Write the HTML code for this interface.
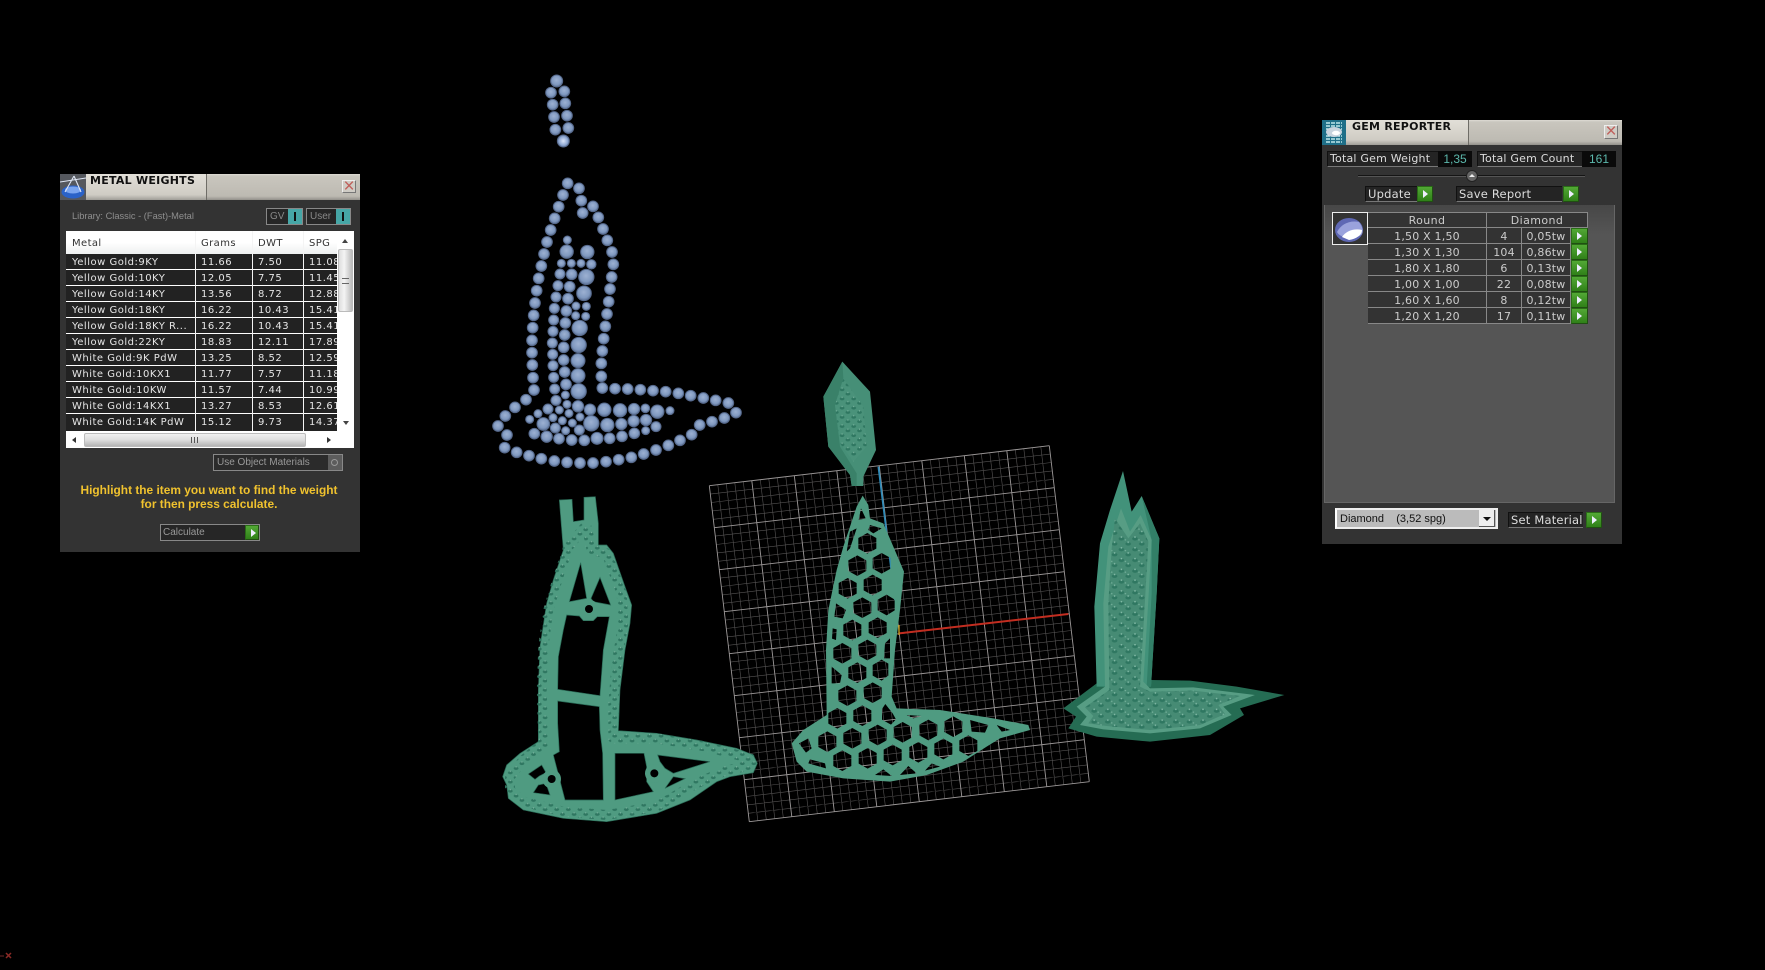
<!DOCTYPE html>
<html><head><meta charset="utf-8">
<style>
html,body{margin:0;padding:0;background:#000;width:1765px;height:970px;overflow:hidden}
body{position:relative;font-family:"DejaVu Sans",sans-serif}
.a{position:absolute;box-sizing:border-box;white-space:nowrap}
svg{position:absolute;left:0;top:0}
.panel{background:#333}
.tb{background:linear-gradient(#dedbd4 0,#c9c6be 8%,#bdbab2 85%,#92908a 100%)}
.tbl{background:linear-gradient(#e2dfd8,#cfccc4 80%,#a09e98 100%);border-right:1px solid #6f6d67}
.ttl{font:bold 11px "DejaVu Sans",sans-serif;color:#111;letter-spacing:.25px}
.cls{background:#cfccc5;border:1px solid #eee;border-right-color:#777;border-bottom-color:#777;color:#c0605c;font:19px/11px "Liberation Sans",sans-serif;text-align:center}
.rows{overflow:hidden;background:#fff}
.r{height:15px;border-bottom:1px solid #fff;background:#222;position:relative;color:#e6e6e6;font:10px/16px "DejaVu Sans",sans-serif;letter-spacing:.5px}
.r span{position:absolute;top:1px}
.v{background:#f4f4f4}
.grn{background:linear-gradient(#52a835,#2f8018);border:1px solid #2a6c17;border-right-color:#204f12;border-bottom-color:#204f12}
.grn:after{content:"";position:absolute;left:5px;top:3px;border-left:5px solid #eef;border-top:4px solid transparent;border-bottom:4px solid transparent}
.box{border:1px solid #888;background:#262626;color:#999;font:10px "Liberation Sans",sans-serif}
.lbl{background:#242424;border-left:1px solid #111;border-top:1px solid #111;border-bottom:1px solid #777;color:#ddd;font:11px/14px "DejaVu Sans",sans-serif;letter-spacing:.2px;padding-left:2px}
.g{color:#ccc;font:11px/17px "DejaVu Sans",sans-serif;letter-spacing:.2px;text-align:center;background:#333;border:1px solid #888;border-top:0;border-left:0}
</style></head><body>
<svg width="1765" height="970" viewBox="0 0 1765 970">
<defs>
<radialGradient id="gem" cx=".48" cy=".42" r=".6"><stop offset="0" stop-color="#9db1d2"/><stop offset=".65" stop-color="#7f98bf"/><stop offset="1" stop-color="#56698c"/></radialGradient>
<radialGradient id="gemb" cx=".5" cy=".5" r=".6"><stop offset="0" stop-color="#dde6fa"/><stop offset=".6" stop-color="#8ea8d2"/><stop offset="1" stop-color="#47597a"/></radialGradient>
<pattern id="spk" width="24" height="19" patternUnits="userSpaceOnUse" patternTransform="scale(1.45)">
<ellipse cx="6" cy="6" rx="5" ry="3.2" fill="#2f7761"/><ellipse cx="18" cy="15" rx="5" ry="3.2" fill="#2f7761"/>
<circle cx="6" cy="3" r="1.4" fill="#78b39e"/><circle cx="18" cy="12" r="1.4" fill="#78b39e"/>
</pattern>
<pattern id="spk3" width="24" height="19" patternUnits="userSpaceOnUse" patternTransform="scale(1.7)">
<ellipse cx="6" cy="6" rx="5" ry="3.2" fill="#2f7761"/><ellipse cx="18" cy="15" rx="5" ry="3.2" fill="#2f7761"/>
<circle cx="6" cy="3" r="1.5" fill="#84bca8"/><circle cx="18" cy="12" r="1.5" fill="#84bca8"/><circle cx="13" cy="8" r="1.2" fill="#78b39e"/>
</pattern>
</defs>

<!-- grid -->
<g transform="matrix(8.5 -1 1 8.4 709.3 485.7)" fill="none" stroke-width=".6">
<path vector-effect="non-scaling-stroke" stroke="#565454" d="M1 0V40M2 0V40M3 0V40M4 0V40M6 0V40M7 0V40M8 0V40M9 0V40M11 0V40M12 0V40M13 0V40M14 0V40M16 0V40M17 0V40M18 0V40M19 0V40M21 0V40M22 0V40M23 0V40M24 0V40M26 0V40M27 0V40M28 0V40M29 0V40M31 0V40M32 0V40M33 0V40M34 0V40M36 0V40M37 0V40M38 0V40M39 0V40M0 1H40M0 2H40M0 3H40M0 4H40M0 6H40M0 7H40M0 8H40M0 9H40M0 11H40M0 12H40M0 13H40M0 14H40M0 16H40M0 17H40M0 18H40M0 19H40M0 21H40M0 22H40M0 23H40M0 24H40M0 26H40M0 27H40M0 28H40M0 29H40M0 31H40M0 32H40M0 33H40M0 34H40M0 36H40M0 37H40M0 38H40M0 39H40"/>
<path vector-effect="non-scaling-stroke" stroke="#9c9898" stroke-width=".9" d="M0 0V40M5 0V40M10 0V40M15 0V40M20 0V40M25 0V40M30 0V40M35 0V40M40 0V40M0 0H40M0 5H40M0 10H40M0 15H40M0 20H40M0 25H40M0 30H40M0 35H40M0 40H40"/>
</g>
<g transform="translate(700 350) scale(.33333)">
<path d="M597 850L1105 792" stroke="#c22d20" stroke-width="6" fill="none"/>
<path d="M535 350L585 750" stroke="#2c8ab8" stroke-width="5" fill="none"/>
<path d="M597 825V855" stroke="#c9a020" stroke-width="4" fill="none"/>
<!-- top leaf -->
<path d="M427 35L510 125 528 300 490 380 490 408 455 408 450 375 385 290 370 140Z" fill="#468f77"/>
<path d="M427 35L370 140 385 290 450 375 455 408 470 408 470 370 420 290 405 165 430 85Z" fill="#3a8169"/>
<path d="M430 85L490 170 500 290 460 335 420 280 405 165Z" fill="#4a927a"/>
<path d="M430 85L490 170 500 290 460 335 420 280 405 165Z" fill="url(#spk)"/>
<!-- hex piece -->
<path fill="#4f9b81" fill-rule="evenodd" d="M488 437L505 465 510 505 550 520 580 590 612 665 600 780 585 900 575 1040 590 1075 720 1080 880 1105 985 1125 990 1140 900 1165 860 1190 790 1235 680 1275 570 1295 430 1285 320 1265 290 1235 275 1180 310 1140 380 1095 378 900 385 780 410 660 430 590 470 470Z
M502 549l27 15v32l-27 15-27-15v-32z
M472 616l27 15v32l-27 15-27-15v-32z
M545 609l27 15v32l-27 15-27-15v-32z
M443 684l27 15v32l-27 15-27-15v-32z
M518 674l27 15v32l-27 15-27-15v-32z
M487 742l27 15v32l-27 15-27-15v-32z
M560 734l24 15v32l-24 15-27-15v-32z
M457 809l27 15v32l-27 15-27-15v-32z
M533 802l27 15v32l-27 15-27-15v-32z
M427 879l27 15v32l-27 15-27-15v-32z
M502 869l27 15v32l-27 15-27-15v-32z
M472 937l27 15v32l-27 15-27-15v-32z
M545 929l20 12v36l-20 15-27-15v-32z
M442 1006l27 15v32l-27 15-27-15v-32z
M518 997l27 15v32l-27 15-27-15v-32z
M412 1074l27 15v32l-27 15-27-15v-32z
M487 1066l27 15v32l-27 15-27-15v-32z
M556 1062l22 28 10 18-15 16-27-15v-32z
M382 1144l27 15v32l-27 15-27-15v-32z
M457 1134l27 15v32l-27 15-27-15v-32z
M533 1124l27 15v32l-27 15-27-15v-32z
M608 1116l27 15v32l-27 15-27-15v-32z
M685 1109l27 15v32l-27 15-27-15v-32z
M760 1099l27 15v32l-27 15-27-15v-32z
M427 1201l27 15v32l-27 15-27-15v-32z
M503 1194l27 15v32l-27 15-27-15v-32z
M578 1184l27 15v32l-27 15-27-15v-32z
M655 1176l27 15v32l-27 15-27-15v-32z
M730 1166l27 15v32l-27 15-27-15v-32z
M805 1156l27 15v32l-27 15-27-15v-32z
M408 760L438 780 428 805 403 800Z
M398 835L410 838 408 870 396 866Z
M395 950L425 975 420 1000 395 1000Z
M555 880L570 865 570 925 552 925Z
M297 1180L325 1165 335 1195 318 1208Z
M330 1228L375 1240 378 1255 325 1240Z
M810 1110L865 1125 855 1148 815 1145Z
M890 1125L930 1140 905 1145Z
M525 1275L550 1258 575 1278Z
M600 1275L625 1248 650 1270Z
M675 1262L695 1240 720 1250Z
M483 475L497 505 476 510Z
M450 545L470 535 450 595 440 605Z
M510 525L545 535 520 550 505 540Z
M620 1095L665 1098 640 1105Z"/>
</g>

<!-- left piece -->
<g transform="translate(490 490) scale(.33333)">
<path fill="#4f9b81" stroke="#2a6b57" stroke-width="2" fill-rule="evenodd" d="M208 30L246 28 250 95 282 90 282 22 316 20 325 100 325 165 350 165 370 190 405 290 425 345 420 400 405 480 390 600 385 722 500 730 620 750 740 775 790 795 802 820 790 848 720 860 680 875 600 930 500 970 350 995 220 985 100 960 55 925 50 885 38 860 50 825 90 790 145 755 145 600 150 470 170 340 190 270 220 180Z
M272 218L290 325 238 335Z
M330 262L362 345 310 335 303 325Z
M230 375L268 378 280 392 310 392 322 380 358 380 340 480 330 617 203 598 205 500 220 420Z
M203 633L328 650 330 720 338 790 340 930 225 930 190 795 208 785 203 700Z
M115 852L155 825 168 848 148 858 135 868Z
M145 885L168 880 180 915 130 908Z
M375 790H462L470 830 470 875 490 905 375 930Z
M503 795L660 815 550 850 525 835 510 815Z
M550 860L585 866 525 895Z"/>
<g fill="#4f9b81"><circle cx="297" cy="357" r="28"/><circle cx="185" cy="867" r="28"/><circle cx="493" cy="850" r="28"/></g>
<g fill="#000"><circle cx="297" cy="357" r="12"/><circle cx="185" cy="867" r="12"/><circle cx="493" cy="850" r="12"/></g>
<path fill="none" stroke-linejoin="round" stroke-width="30" stroke="url(#spk)" d="M285 110L235 170 205 260 175 360 160 470 155 600 160 760 100 810 60 860 60 900 100 935 220 965 350 975 500 950 620 880 700 845 790 822 780 805 650 770 500 745 370 745 370 640 380 520 400 400 395 310 350 190 305 180 290 110"/>
</g>

<!-- right piece -->
<g transform="translate(1050 460) scale(.33333)">
<path fill="#256c53" d="M40 745L140 670 303 660 420 662 560 680 703 705 570 745 582 765 480 825 300 845 140 830 55 805 78 770Z"/>
<path fill="#42927a" d="M219 33L245 155 275 108 328 235 320 400 303 680 140 680 133 440 150 250 180 150Z"/>
<path fill="#327f67" d="M275 108L328 235 320 400 303 680 290 680 305 400 305 240Z"/>
<path fill="#579d84" d="M213 145L240 215 272 165 305 240 295 420 280 665 300 685 430 682 615 705 520 740 545 765 450 805 300 820 160 808 90 795 110 770 80 740 165 680 160 430 175 260Z"/>
<path fill="#468b74" d="M195 175L235 235 270 190 295 245 285 420 270 680 300 695 430 692 570 708 505 735 525 762 450 795 300 810 170 798 115 790 130 768 105 742 178 690 175 430 185 265Z"/>
<path fill="url(#spk3)" d="M195 175L235 235 270 190 295 245 285 420 270 680 300 695 430 692 570 708 505 735 525 762 450 795 300 810 170 798 115 790 130 768 105 742 178 690 175 430 185 265Z"/>
</g>

<!-- gems -->
<g transform="translate(480 60) scale(.33333)" fill="url(#gem)" stroke="#56698c" stroke-width="3">
<circle cx="230" cy="63" r="18"/><circle cx="213" cy="98" r="16"/><circle cx="253" cy="94" r="16"/><circle cx="218" cy="134" r="16"/><circle cx="256" cy="130" r="16"/><circle cx="222" cy="171" r="16"/><circle cx="261" cy="167" r="16"/><circle cx="226" cy="209" r="16"/><circle cx="265" cy="204" r="16"/><circle cx="250" cy="243" r="18" fill="url(#gemb)"/>
<circle cx="263" cy="370" r="16"/><circle cx="249" cy="405" r="16"/><circle cx="236" cy="440" r="16"/><circle cx="224" cy="475" r="16"/><circle cx="212" cy="510" r="16"/><circle cx="201" cy="546" r="16"/><circle cx="192" cy="582" r="16"/><circle cx="184" cy="618" r="16"/><circle cx="176" cy="655" r="16"/><circle cx="170" cy="692" r="16"/><circle cx="165" cy="729" r="16"/><circle cx="161" cy="766" r="16"/><circle cx="158" cy="803" r="16"/><circle cx="156" cy="841" r="16"/><circle cx="156" cy="878" r="16"/><circle cx="157" cy="915" r="16"/><circle cx="159" cy="953" r="16"/><circle cx="162" cy="990" r="16"/><circle cx="138" cy="1019" r="16"/><circle cx="105" cy="1042" r="16"/><circle cx="76" cy="1068" r="16"/><circle cx="54" cy="1098" r="16"/><circle cx="81" cy="1125" r="16"/><circle cx="74" cy="1163" r="16"/><circle cx="110" cy="1177" r="16"/><circle cx="147" cy="1187" r="16"/><circle cx="184" cy="1196" r="16"/><circle cx="223" cy="1203" r="16"/><circle cx="261" cy="1207" r="16"/><circle cx="300" cy="1209" r="16"/><circle cx="339" cy="1209" r="16"/><circle cx="378" cy="1205" r="16"/><circle cx="416" cy="1199" r="16"/><circle cx="454" cy="1192" r="16"/><circle cx="491" cy="1182" r="16"/><circle cx="528" cy="1170" r="16"/><circle cx="565" cy="1156" r="16"/><circle cx="600" cy="1141" r="16"/><circle cx="635" cy="1124" r="16"/><circle cx="659" cy="1095" r="16"/><circle cx="696" cy="1085" r="16"/><circle cx="733" cy="1074" r="16"/><circle cx="768" cy="1058" r="16"/><circle cx="745" cy="1029" r="16"/><circle cx="707" cy="1021" r="16"/><circle cx="670" cy="1014" r="16"/><circle cx="632" cy="1007" r="16"/><circle cx="595" cy="1000" r="16"/><circle cx="557" cy="995" r="16"/><circle cx="519" cy="992" r="16"/><circle cx="481" cy="989" r="16"/><circle cx="443" cy="987" r="16"/><circle cx="405" cy="986" r="16"/><circle cx="367" cy="984" r="16"/><circle cx="364" cy="949" r="16"/><circle cx="364" cy="910" r="16"/><circle cx="367" cy="873" r="16"/><circle cx="371" cy="836" r="16"/><circle cx="376" cy="799" r="16"/><circle cx="381" cy="762" r="16"/><circle cx="386" cy="725" r="16"/><circle cx="390" cy="687" r="16"/><circle cx="395" cy="651" r="16"/><circle cx="400" cy="613" r="16"/><circle cx="396" cy="576" r="16"/><circle cx="382" cy="541" r="16"/><circle cx="369" cy="507" r="16"/><circle cx="355" cy="472" r="16"/><circle cx="339" cy="439" r="16"/><circle cx="304" cy="422" r="16"/><circle cx="297" cy="385" r="16"/><circle cx="308" cy="459" r="16"/>
<circle cx="262" cy="540" r="12"/><circle cx="260" cy="575" r="20"/><circle cx="322" cy="576" r="20"/><circle cx="244" cy="610" r="12"/><circle cx="274" cy="610" r="12"/><circle cx="303" cy="610" r="12"/><circle cx="334" cy="613" r="14"/><circle cx="240" cy="642" r="15"/><circle cx="275" cy="643" r="16"/><circle cx="319" cy="651" r="23"/><circle cx="234" cy="677" r="15"/><circle cx="269" cy="680" r="16"/><circle cx="312" cy="700" r="22"/><circle cx="228" cy="711" r="15"/><circle cx="264" cy="716" r="16"/><circle cx="288" cy="738" r="12"/><circle cx="319" cy="739" r="12"/><circle cx="223" cy="745" r="15"/><circle cx="259" cy="753" r="16"/><circle cx="287" cy="767" r="12"/><circle cx="317" cy="769" r="12"/><circle cx="221" cy="780" r="15"/><circle cx="256" cy="789" r="16"/><circle cx="299" cy="804" r="23"/><circle cx="219" cy="814" r="15"/><circle cx="254" cy="825" r="16"/><circle cx="217" cy="849" r="15"/><circle cx="251" cy="862" r="16"/><circle cx="296" cy="855" r="23"/><circle cx="218" cy="883" r="15"/><circle cx="251" cy="900" r="16"/><circle cx="294" cy="902" r="21"/><circle cx="219" cy="917" r="15"/><circle cx="254" cy="936" r="16"/><circle cx="294" cy="947" r="21"/><circle cx="221" cy="952" r="15"/><circle cx="258" cy="973" r="16"/><circle cx="296" cy="994" r="23"/><circle cx="224" cy="987" r="15"/><circle cx="256" cy="1005" r="12"/><circle cx="228" cy="1021" r="15"/><circle cx="261" cy="1033" r="12"/><circle cx="294" cy="1039" r="17"/><circle cx="204" cy="1047" r="15"/><circle cx="238" cy="1050" r="12"/><circle cx="330" cy="1049" r="17"/><circle cx="373" cy="1049" r="20"/><circle cx="420" cy="1051" r="20"/><circle cx="462" cy="1047" r="17"/><circle cx="496" cy="1045" r="13"/><circle cx="532" cy="1055" r="20"/><circle cx="570" cy="1052" r="12"/><circle cx="174" cy="1061" r="12"/><circle cx="267" cy="1060" r="12"/><circle cx="149" cy="1078" r="12"/><circle cx="219" cy="1073" r="12"/><circle cx="300" cy="1071" r="12"/><circle cx="247" cy="1082" r="12"/><circle cx="190" cy="1092" r="19"/><circle cx="277" cy="1089" r="12"/><circle cx="334" cy="1090" r="23"/><circle cx="382" cy="1095" r="20"/><circle cx="424" cy="1092" r="17"/><circle cx="461" cy="1083" r="17"/><circle cx="498" cy="1080" r="17"/><circle cx="528" cy="1100" r="15"/><circle cx="226" cy="1104" r="15"/><circle cx="298" cy="1110" r="15"/><circle cx="257" cy="1112" r="12"/><circle cx="163" cy="1121" r="16"/><circle cx="497" cy="1112" r="12"/><circle cx="463" cy="1120" r="16"/><circle cx="426" cy="1129" r="16"/><circle cx="200" cy="1130" r="17"/><circle cx="237" cy="1136" r="16"/><circle cx="275" cy="1140" r="16"/><circle cx="313" cy="1141" r="16"/><circle cx="351" cy="1135" r="18"/><circle cx="389" cy="1135" r="16"/>
</g>
<!-- corner marker -->
<path d="M6 953L11 958M11 953L6 958" stroke="#8a2a26" stroke-width="1.5"/>
<path d="M0 956H4" stroke="#4a1c1c" stroke-width="1.5"/>
</svg>

<!-- METAL WEIGHTS -->
<div class="a panel" style="left:60px;top:174px;width:300px;height:378px"></div>
<div class="a tb" style="left:60px;top:174px;width:300px;height:26px"></div>
<div class="a tbl" style="left:85px;top:174px;width:122px;height:26px"></div>
<div class="a ttl" style="left:90px;top:174px">METAL WEIGHTS</div>
<svg class="a" style="left:60px;top:174px" width="26" height="26" viewBox="0 0 26 26">
<rect width="26" height="26" fill="#55585e"/>
<ellipse cx="13" cy="18" rx="11.5" ry="6.5" fill="#2a62c8"/><ellipse cx="13" cy="16" rx="8" ry="3.5" fill="#7aa5f0"/>
<path d="M14 2L5 18M14 2L21 18M0 8L26 4" stroke="#dfe6f5" stroke-width="1.1" fill="none"/>
</svg>
<div class="a cls" style="left:342px;top:180px;width:14px;height:13px">×</div>
<div class="a" style="left:72px;top:210px;font:9.3px/13px 'Liberation Sans',sans-serif;color:#8f8f8f">Library: Classic - (Fast)-Metal</div>
<div class="a box" style="left:266px;top:208px;width:37px;height:17px;padding:1px 0 0 3px;font-size:10px;line-height:14px;color:#888">GV</div>
<div class="a" style="left:288px;top:209px;width:14px;height:15px;background:#46a6a6"></div><div class="a" style="left:294px;top:212px;width:2px;height:9px;background:#111"></div>
<div class="a box" style="left:306px;top:208px;width:45px;height:17px;padding:1px 0 0 3px;font-size:10px;line-height:14px;color:#888">User</div>
<div class="a" style="left:336px;top:209px;width:14px;height:15px;background:#46a6a6"></div><div class="a" style="left:342px;top:212px;width:2px;height:9px;background:#111"></div>

<div class="a" style="left:66px;top:231px;width:288px;height:217px;background:#fff"></div>
<div class="a" style="left:66px;top:231px;width:271px;height:23px;background:linear-gradient(#fff 50%,#eef0f0);font:10px/26px 'DejaVu Sans',sans-serif;color:#333;letter-spacing:.4px">
<span class="a" style="left:6px;top:0">Metal</span><span class="a" style="left:135px;top:0">Grams</span><span class="a" style="left:192px;top:0">DWT</span><span class="a" style="left:243px;top:0">SPG</span></div>
<div class="a rows" style="left:66px;top:254px;width:271px;height:177px">
<div class="r"><span style="left:6px">Yellow Gold:9KY</span><span style="left:135px">11.66</span><span style="left:192px">7.50</span><span style="left:243px">11.08</span></div>
<div class="r"><span style="left:6px">Yellow Gold:10KY</span><span style="left:135px">12.05</span><span style="left:192px">7.75</span><span style="left:243px">11.45</span></div>
<div class="r"><span style="left:6px">Yellow Gold:14KY</span><span style="left:135px">13.56</span><span style="left:192px">8.72</span><span style="left:243px">12.88</span></div>
<div class="r"><span style="left:6px">Yellow Gold:18KY</span><span style="left:135px">16.22</span><span style="left:192px">10.43</span><span style="left:243px">15.41</span></div>
<div class="r"><span style="left:6px">Yellow Gold:18KY R...</span><span style="left:135px">16.22</span><span style="left:192px">10.43</span><span style="left:243px">15.41</span></div>
<div class="r"><span style="left:6px">Yellow Gold:22KY</span><span style="left:135px">18.83</span><span style="left:192px">12.11</span><span style="left:243px">17.89</span></div>
<div class="r"><span style="left:6px">White Gold:9K PdW</span><span style="left:135px">13.25</span><span style="left:192px">8.52</span><span style="left:243px">12.59</span></div>
<div class="r"><span style="left:6px">White Gold:10KX1</span><span style="left:135px">11.77</span><span style="left:192px">7.57</span><span style="left:243px">11.18</span></div>
<div class="r"><span style="left:6px">White Gold:10KW</span><span style="left:135px">11.57</span><span style="left:192px">7.44</span><span style="left:243px">10.99</span></div>
<div class="r"><span style="left:6px">White Gold:14KX1</span><span style="left:135px">13.27</span><span style="left:192px">8.53</span><span style="left:243px">12.61</span></div>
<div class="r" style="height:17px"><span style="left:6px">White Gold:14K PdW</span><span style="left:135px">15.12</span><span style="left:192px">9.73</span><span style="left:243px">14.37</span></div>
</div>
<div class="a v" style="left:195px;top:231px;width:1px;height:200px"></div>
<div class="a v" style="left:252px;top:231px;width:1px;height:200px"></div>
<div class="a v" style="left:303px;top:231px;width:1px;height:200px"></div>
<!-- scrollbars -->
<div class="a" style="left:338px;top:249px;width:15px;height:63px;background:linear-gradient(90deg,#ddd,#f4f4f4 40%,#bbb);border:1px solid #bbb;border-radius:2px"></div>
<div class="a" style="left:342px;top:278px;width:7px;height:6px;border-top:1px solid #666;border-bottom:1px solid #666"></div>
<div class="a" style="left:342px;top:239px;border-left:3px solid transparent;border-right:3px solid transparent;border-bottom:4px solid #444"></div>
<div class="a" style="left:343px;top:421px;border-left:3px solid transparent;border-right:3px solid transparent;border-top:4px solid #444"></div>
<div class="a" style="left:84px;top:433px;width:222px;height:14px;background:linear-gradient(#f0f0f0,#ddd 50%,#b5b5b5);border:1px solid #bbb;border-radius:2px"></div>
<div class="a" style="left:191px;top:437px;width:1px;height:6px;background:#555;box-shadow:3px 0 #555,6px 0 #555"></div>
<div class="a" style="left:72px;top:437px;border-top:3px solid transparent;border-bottom:3px solid transparent;border-right:4px solid #333"></div>
<div class="a" style="left:327px;top:437px;border-top:3px solid transparent;border-bottom:3px solid transparent;border-left:4px solid #333"></div>

<div class="a box" style="left:213px;top:454px;width:130px;height:17px;background:#2b2b2b;padding-left:3px;line-height:16px">Use Object Materials</div>
<div class="a" style="left:328px;top:455px;width:14px;height:15px;background:#5c5c5c"></div>
<div class="a" style="left:331px;top:459px;width:7px;height:7px;border:1px solid #999;border-radius:50%"></div>
<div class="a" style="left:60px;top:484px;width:298px;text-align:center;font:bold 11.9px/13.5px 'Liberation Sans',sans-serif;color:#f0c22e;white-space:normal">Highlight the item you want to find the weight<br>for then press calculate.</div>
<div class="a box" style="left:160px;top:524px;width:100px;height:17px;padding-left:2px;line-height:16px">Calculate</div>
<div class="a grn" style="left:245px;top:525px;width:14px;height:15px"></div>

<!-- GEM REPORTER -->
<div class="a panel" style="left:1322px;top:120px;width:300px;height:424px"></div>
<div class="a tb" style="left:1322px;top:120px;width:300px;height:25px"></div>
<div class="a tbl" style="left:1346px;top:120px;width:123px;height:25px"></div>
<div class="a ttl" style="left:1352px;top:120px">GEM REPORTER</div>
<svg class="a" style="left:1322px;top:120px" width="24" height="25" viewBox="0 0 24 25">
<rect width="24" height="25" fill="#1f6f88"/>
<path d="M4 3H20M4 6H20M4 9H20M4 16H20M4 19H20M4 22H20" stroke="#dff" stroke-width="1.2" stroke-dasharray="4 1"/>
<ellipse cx="12" cy="12" rx="8" ry="5" fill="#c9d4de"/><ellipse cx="14" cy="13" rx="4" ry="2.2" fill="#fff"/>
</svg>
<div class="a cls" style="left:1604px;top:125px;width:14px;height:14px">×</div>

<div class="a lbl" style="left:1327px;top:151px;width:111px;height:16px">Total Gem Weight</div>
<div class="a" style="left:1438px;top:151px;width:34px;height:16px;background:#0a0a0a;color:#5cb8ac;font:12px/17px 'Liberation Sans',sans-serif;text-align:center">1,35</div>
<div class="a lbl" style="left:1477px;top:151px;width:105px;height:16px">Total Gem Count</div>
<div class="a" style="left:1582px;top:151px;width:34px;height:16px;background:#0a0a0a;color:#5cb8ac;font:12px/17px 'Liberation Sans',sans-serif;text-align:center">161</div>
<div class="a" style="left:1358px;top:175px;width:227px;height:2px;background:#151515;border-bottom:1px solid #555"></div>
<div class="a" style="left:1466px;top:170px;width:12px;height:12px;border-radius:50%;background:#666;border:1px solid #222"></div>
<div class="a" style="left:1469px;top:174px;border-left:3px solid transparent;border-right:3px solid transparent;border-bottom:3px solid #eee"></div>
<div class="a lbl" style="left:1365px;top:186px;width:52px;height:16px;font-size:11.5px">Update</div>
<div class="a grn" style="left:1417px;top:186px;width:16px;height:16px"></div>
<div class="a lbl" style="left:1456px;top:186px;width:106px;height:16px;font-size:11.5px">Save Report</div>
<div class="a grn" style="left:1563px;top:186px;width:16px;height:16px"></div>

<div class="a" style="left:1324px;top:205px;width:291px;height:298px;background:linear-gradient(#474747,#555 10%);border:1px solid #666;border-top:0"></div>
<svg class="a" style="left:1332px;top:212px" width="36" height="33" viewBox="0 0 36 33">
<rect x=".5" y=".5" width="35" height="32" fill="#333" stroke="#eee"/>
<ellipse cx="17" cy="18" rx="14" ry="12" fill="#5f68b4"/><path d="M5 20C9 12 18 8 27 10 31 15 31 19 30 22 26 27 9 28 5 20Z" fill="#9aa2dc"/><path d="M10 25C14 19 22 16 30 18 30 23 24 27 17 28Z" fill="#fff"/>
</svg>
<div class="a g" style="left:1368px;top:212px;width:119px;height:16px;border-top:1px solid #888;line-height:15px;letter-spacing:.4px">Round</div>
<div class="a g" style="left:1487px;top:212px;width:101px;height:16px;border-top:1px solid #888;line-height:15px;letter-spacing:.4px">Diamond</div>

<div class="a g" style="left:1368px;top:228px;width:119px;height:16px">1,50 X 1,50</div><div class="a g" style="left:1487px;top:228px;width:35px;height:16px">4</div><div class="a g" style="left:1522px;top:228px;width:49px;height:16px">0,05tw</div><div class="a grn" style="left:1571px;top:228px;width:17px;height:16px"></div>
<div class="a g" style="left:1368px;top:244px;width:119px;height:16px">1,30 X 1,30</div><div class="a g" style="left:1487px;top:244px;width:35px;height:16px">104</div><div class="a g" style="left:1522px;top:244px;width:49px;height:16px">0,86tw</div><div class="a grn" style="left:1571px;top:244px;width:17px;height:16px"></div>
<div class="a g" style="left:1368px;top:260px;width:119px;height:16px">1,80 X 1,80</div><div class="a g" style="left:1487px;top:260px;width:35px;height:16px">6</div><div class="a g" style="left:1522px;top:260px;width:49px;height:16px">0,13tw</div><div class="a grn" style="left:1571px;top:260px;width:17px;height:16px"></div>
<div class="a g" style="left:1368px;top:276px;width:119px;height:16px">1,00 X 1,00</div><div class="a g" style="left:1487px;top:276px;width:35px;height:16px">22</div><div class="a g" style="left:1522px;top:276px;width:49px;height:16px">0,08tw</div><div class="a grn" style="left:1571px;top:276px;width:17px;height:16px"></div>
<div class="a g" style="left:1368px;top:292px;width:119px;height:16px">1,60 X 1,60</div><div class="a g" style="left:1487px;top:292px;width:35px;height:16px">8</div><div class="a g" style="left:1522px;top:292px;width:49px;height:16px">0,12tw</div><div class="a grn" style="left:1571px;top:292px;width:17px;height:16px"></div>
<div class="a g" style="left:1368px;top:308px;width:119px;height:16px">1,20 X 1,20</div><div class="a g" style="left:1487px;top:308px;width:35px;height:16px">17</div><div class="a g" style="left:1522px;top:308px;width:49px;height:16px">0,11tw</div><div class="a grn" style="left:1571px;top:308px;width:17px;height:16px"></div>

<div class="a" style="left:1335px;top:508px;width:163px;height:21px;background:#bbb;border:2px solid #eee;border-left-color:#fff;font:11px/18px 'Liberation Sans',sans-serif;color:#111;padding-left:3px;white-space:pre">Diamond    (3,52 spg)</div>
<div class="a" style="left:1479px;top:510px;width:16px;height:17px;background:#eee;border-right:1px solid #555;border-bottom:1px solid #555"></div>
<div class="a" style="left:1483px;top:517px;border-left:4px solid transparent;border-right:4px solid transparent;border-top:4px solid #111"></div>
<div class="a lbl" style="left:1508px;top:512px;width:75px;height:16px;font-size:11.5px">Set Material</div>
<div class="a grn" style="left:1586px;top:512px;width:16px;height:16px"></div>
</body></html>
